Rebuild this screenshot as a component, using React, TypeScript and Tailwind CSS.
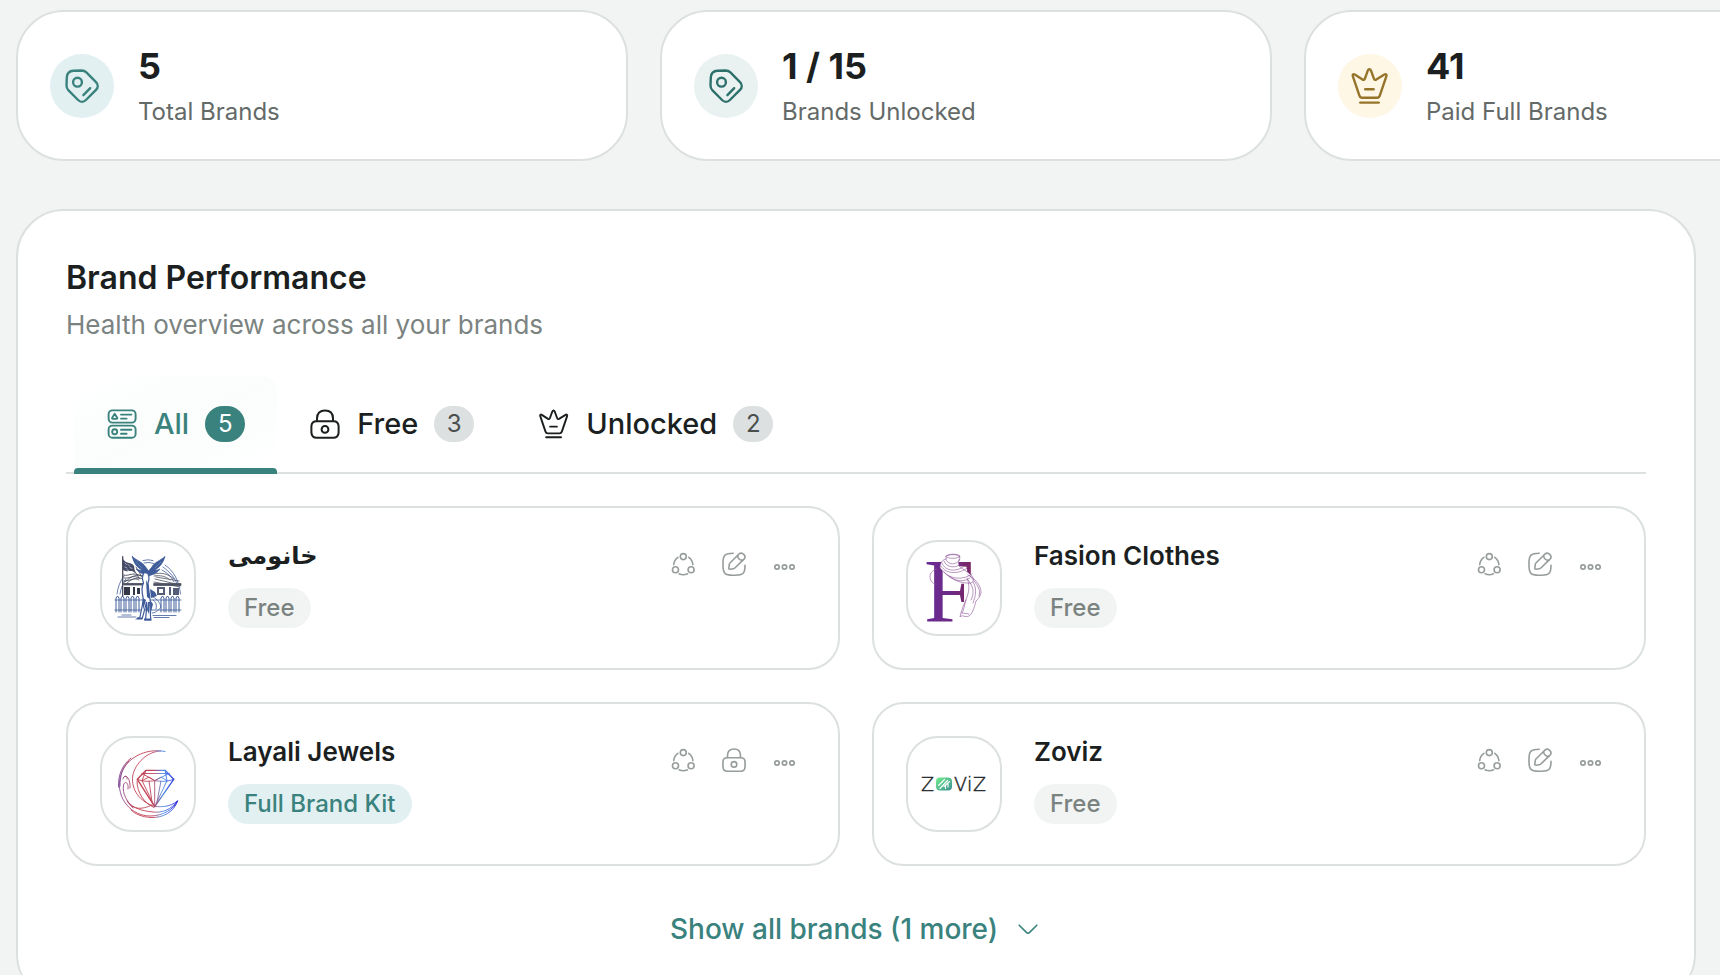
import React, { useState } from 'react';

type TabId = 'all' | 'free' | 'unlocked';

interface IconProps {
  className?: string;
}

interface Brand {
  id: number;
  name: string;
  plan: 'free' | 'full';
  logo: React.ReactNode;
  rtl?: boolean;
}

const TagIcon: React.FC<IconProps> = ({ className }) => (
  <svg viewBox="0 0 40 40" fill="none" stroke="currentColor" strokeWidth="2.4" strokeLinecap="round" strokeLinejoin="round" className={className} aria-hidden="true">
    <path d="M11.5 4.8L19.5 4.5C21.5 4.5 23 5 24.4 6.4L34 16.1C36.3 18.4 36.3 21.6 34 23.9L23.9 34C21.6 36.3 18.4 36.3 16.1 34L6.5 24.4C5 22.9 4.4 21.5 4.5 19.4L4.8 11.5C5 7 7 5 11.5 4.8Z" />
    <circle cx="15.5" cy="16.2" r="4.4" />
    <path d="M21.4 29.2L28.2 22.2" />
  </svg>
);

const CrownIcon: React.FC<IconProps> = ({ className }) => (
  <svg viewBox="0 0 40 40" fill="none" stroke="currentColor" strokeWidth="2.4" strokeLinecap="round" strokeLinejoin="round" className={className} aria-hidden="true">
    <path d="M2.8 10.2C2.3 8.6 3.3 7.7 4.8 8.6L12.5 13.6C13.6 14.2 14.4 13.8 14.8 12.8L17.9 4.4C18.6 2.7 20.2 2.7 20.9 4.4L24 12.8C24.4 13.8 25.2 14.2 26.3 13.6L34.4 8.6C35.9 7.7 36.9 8.6 36.4 10.2L29.8 29.6C29.3 31 28.6 31.7 27 31.7H12.2C10.6 31.7 9.9 31 9.4 29.6Z" />
    <path d="M15.2 23.3H23.6" />
    <path d="M10.2 36.6H28.8" />
  </svg>
);

const LockIcon: React.FC<IconProps> = ({ className }) => (
  <svg viewBox="0 0 32 32" fill="none" stroke="currentColor" strokeWidth="2" strokeLinecap="round" strokeLinejoin="round" className={className} aria-hidden="true">
    <path d="M8 13V10.4C8 5.4 11 2.4 16 2.4C21 2.4 24 5.4 24 10.4V13" />
    <path d="M7.5 13.2H24.5C27.6 13.2 29.4 15 29.6 18V24.6C29.4 28.2 27.6 29.8 24.2 29.8H7.8C4.4 29.8 2.6 28.2 2.4 24.6V18C2.6 15 4.4 13.2 7.5 13.2Z" />
    <circle cx="16" cy="21.4" r="3.4" />
  </svg>
);

const ListIcon: React.FC<IconProps> = ({ className }) => (
  <svg viewBox="0 0 32 32" fill="none" stroke="currentColor" strokeWidth="1.9" strokeLinecap="round" strokeLinejoin="round" className={className} aria-hidden="true">
    <rect x="2.6" y="2.4" width="27" height="12.2" rx="3.8" />
    <rect x="2.6" y="17.6" width="27" height="12.2" rx="3.8" />
    <path d="M8.7 5.8L11.2 9.7C11.5 10.4 11.2 10.9 10.5 10.9H6.9C6.2 10.9 5.9 10.4 6.2 9.7Z" />
    <circle cx="8.7" cy="23.7" r="2.5" />
    <path d="M15 6.6H25.4M15 10.6H20.6M15 21.8H25.4M15 25.8H20.6" />
  </svg>
);

const ShareIcon: React.FC<IconProps> = ({ className }) => (
  <svg viewBox="0 0 26 26" fill="none" stroke="currentColor" strokeWidth="1.6" strokeLinecap="round" className={className} aria-hidden="true">
    <circle cx="12.3" cy="5.6" r="3" />
    <circle cx="4.5" cy="18.7" r="3" />
    <circle cx="20.1" cy="18.7" r="3" />
    <path d="M2.7 13.6C2.9 10.6 4.5 8 6.9 6.3" />
    <path d="M21.9 13.6C21.7 10.6 20.1 8 17.7 6.3" />
    <path d="M8.1 22.8C10.7 24 13.9 24 16.5 22.8" />
  </svg>
);

const EditIcon: React.FC<IconProps> = ({ className }) => (
  <svg viewBox="0 0 26 26" fill="none" stroke="currentColor" strokeWidth="1.6" strokeLinecap="round" strokeLinejoin="round" className={className} aria-hidden="true">
    <path d="M12.2 2.2C4 2.2 2 4 2 12V14.6C2 22.4 4 24.2 11.8 24.2H14.2C22.2 24.2 24 22.4 24 14.2" />
    <path d="M17.8 3.2L9.2 11.8C8.7 12.3 8.4 12.8 8.3 13.5L7.8 17C7.7 17.9 8.1 18.3 9 18.2L12.4 17.7C13.1 17.6 13.6 17.3 14.1 16.8L23 8.2C25.8 5 21.3 0.2 17.8 3.2Z" />
    <path d="M16.6 4.6C16.8 7.2 18.8 9.5 21.8 9.4" />
  </svg>
);

const DotsIcon: React.FC<IconProps> = ({ className }) => (
  <svg viewBox="0 0 26 26" fill="none" stroke="currentColor" strokeWidth="1.7" className={className} aria-hidden="true">
    <circle cx="6" cy="16" r="2.2" />
    <circle cx="13.5" cy="16" r="2.2" />
    <circle cx="21" cy="16" r="2.2" />
  </svg>
);

const ChevronIcon: React.FC<IconProps> = ({ className }) => (
  <svg viewBox="0 0 28 28" fill="none" stroke="currentColor" strokeWidth="1.6" strokeLinecap="round" strokeLinejoin="round" className={className} aria-hidden="true">
    <path d="M5.2 10.2L12.4 17.4C13.5 18.5 14.5 18.5 15.6 17.4L22.8 10.2" />
  </svg>
);

const StatueLogo = () => (
  <svg viewBox="2 2 92 92" fill="none" stroke="#3f5c9a" strokeWidth="0.8" strokeLinecap="round" className="size-full" aria-hidden="true">
    <path d="M17 54C18 47 20 41 24 36M20 54C21 48 23 43 26 39M43 20.5Q48 19 53 20.5M44 23Q49 21.5 54 23.5M65 25C74 31 79 41 80.5 54M63 27C70 32 75 38 77 44M62 30C68 33 72 38 74 42" />
    {/* house */}
    <g stroke="#4d5262">
      <path d="M25 42C32 35 38 34 44 36M27 43C33 38 38 37 44 39M54 36C60 35 66 36 70 40M54 34C62 32 68 34 74 39M55 39L80 45M54 42L80 47M26 44H46M56 37L79 41" />
      <path d="M24 43.5H44V45H24ZM54 43.5H81V45.5H54Z" fill="#4d5262" />
    </g>
    <path d="M24 47H30V55H24ZM33 47H35V55H33ZM37 48H40V54H37Z" fill="#333847" stroke="none" />
    <path d="M57 47H65V55H57ZM69 47H71V55H69ZM73 48H79V55H73Z" fill="#545c78" stroke="none" />
    <path d="M59 49H63V53H59Z" fill="#fff" stroke="none" />
    {/* flag */}
    <path d="M22.7 16.5V56" stroke="#3a3f52" strokeWidth="1.2" />
    <path d="M23 19C27 25 31 21 34 26L35 33C31 29 28 33 23 30Z" fill="#454b66" stroke="none" />
    <path d="M23.5 35C29 37 32 31 41 36M24 38C30 39 33 34 40 38.5M24 41C30 41 34 37 39 40M36 27L42 37M34 30L39 38" stroke="#3a3f52" />
    <path d="M25 23L26.5 24.5M28 24.5L29.5 26M25 27L27 28M30 27.5L32 28.5M27 30L28.5 30.5" stroke="#d5d9e4" strokeWidth="0.7" />
    {/* wings */}
    <path d="M32.3 16.5C34 24 37 27 42 30C40 30.5 38 30 36 29C39 32 43 34.5 48 36C54 34.5 58 32 60 29C58 30 57 30.5 55 30C60 27 63 23 65 16.5C60 21 55 21.5 51.5 27.5L48.5 31L46 27.5C42 21.5 37 21 32.3 16.5Z" fill="#3f5c9a" stroke="#3f5c9a" />
    <path d="M36 22L42 28M61 22L55 28" stroke="#8fa1cb" strokeWidth="0.5" />
    {/* fence */}
    <path d="M15 60H81M15 70H81" />
    <path d="M16 72V58L17.5 56L19 58V72M21 72V58L22.5 56L24 58V72M26 72V58L27.5 56L29 58V72M31 72V58L32.5 56L34 58V72M36 72V58L37.5 56L39 58V72M61 72V58L62.5 56L64 58V72M66 72V58L67.5 56L69 58V72M71 72V58L72.5 56L74 58V72M76 72V58L77.5 56L79 58V72" strokeWidth="1" />
    {/* figure */}
    <path d="M44 33C42 36 42 39 43.5 43C41 48 42 53 43 57C43.5 64 41 70 40 77L37 79H42C44 73 45 68 46.5 62C47 69 46 74 45.5 80H51C49.5 73 51 66 50 59C49 53 48.5 48 48 43C49.5 39 49 36 48 34" fill="#fff" strokeWidth="1.2" />
    <path d="M46 40L48 44L50 59L47 57ZM43 58L46 60L43 70ZM48 62L50 62L49 74L47 70ZM50 49L55 52L57 56L51 58ZM50 60L53 64L51 72Z" fill="#3f5c9a" stroke="none" />
    <path d="M51 56C56 58 60 62 61 67C58 71 55 73 52 73M53 60C56 62 57 65 56 69" />
    <path d="M18 77H36M22 75H31M53 75.5H76M54 77.5H69" />
    <path d="M37 77.5H42V79H37ZM44 78.5H51V80.5H44Z" fill="#3f5c9a" stroke="none" />
  </svg>
);

const FashionLogo = () => (
  <svg viewBox="2 2 92 92" fill="none" strokeWidth="0.6" strokeLinecap="round" className="size-full overflow-visible" aria-hidden="true">
    <defs>
      <linearGradient id="fashion-ink" x1="0" x2="1" y1="0" y2="0">
        <stop offset="0" stopColor="#6b2c96" />
        <stop offset="0.5" stopColor="#6b2a86" />
        <stop offset="1" stopColor="#7c2560" />
      </linearGradient>
    </defs>
    <text x="18" y="82" fontSize="90" fill="url(#fashion-ink)" className="font-['Liberation_Serif',serif]">F</text>
    <g stroke="#8a4f96">
      <path d="M40 16C43 13.5 51 13.5 54 16C53 20 52 23 53 26C56 29 61 31 66 36C69 41 67 44 61 43C53 43 42 38 34 28C34 23 36 20 40 19C41 18 39 17 40 16Z" fill="#fff" />
      <ellipse cx="47" cy="16.5" rx="6.5" ry="1.8" />
      <path d="M40 19C41 25 51 26 54 19M38 21C40 28 51 29 56 23M36 23C39 32 52 32 58 26M35 26C40 35 54 34 61 28M38 32C45 40 58 40 66 34M43 36C50 42 58 42 64 38" />
      <path d="M31 29C24 30 22 38 26 42C28 44 30 45 31 44" />
      <path d="M62 35C69 38 75 46 75 52C75 56 72 59 70 61C68 69 66 74 63 76C59 78 56 74 54 77C55 70 59 63 61 57C64 49 63 43 61 38" />
      <path d="M64 36C72 45 75 50 73 56M62 40C67 46 69 52 65 60M67 42C71 48 70 55 67 63M60 60C58 66 58 70 56 73M56 73L63 74" />
    </g>
  </svg>
);

const JewelsLogo = () => (
  <svg viewBox="2 2 92 92" fill="none" stroke="url(#jewels-line)" strokeWidth="0.9" strokeLinecap="round" strokeLinejoin="round" className="size-full" aria-hidden="true">
    <defs>
      <linearGradient id="jewels-line" gradientUnits="userSpaceOnUse" x1="18" y1="0" x2="78" y2="0">
        <stop offset="0" stopColor="#7d4a9c" />
        <stop offset="0.3" stopColor="#c43f50" />
        <stop offset="0.58" stopColor="#c0445a" />
        <stop offset="0.75" stopColor="#4d8fe8" />
        <stop offset="1" stopColor="#2c1fd6" />
      </linearGradient>
    </defs>
    <path d="M65 15.5C46 11.5 24 22 20 42C16 63 32 80 50 80C63 80 74 73 77.5 65C70 71 62 71 55 70.5C40 66 31 54 32.7 40C35 27 48 15 61 15" />
    <path d="M77.5 65C74 76 63 82 51 81.5C42 81 35 78 31 74M77.5 65C71 74 62 77 53 76C42 75 33 72 28 66" />
    <path d="M31 22C22 29 18 39 18.5 51M29 25C22 32 20 40 20 50M37 45C37 57 44 67 54 71.5M27 65C32 74 42 74 52 69" />
    <path d="M28 53C29 47 25 44 23.5 49C22 58 27 65 33 72M24 41C26 39 28 41 27 43M30 52C31 41 24 37 23 43" />
    <path d="M46 34.3H65L73.7 43.3L54.7 70.7L37.3 43.3Z" strokeWidth="1.3" />
    <path d="M37.3 43.3C44 46 49 45.5 54.7 44.7C61 45.5 67 46 73.7 43.3M46 34.3L42 44.7L54.7 70.7L67 44.7L65 34.3M42 37.5L54.7 44.7L69 37.5M42 44.7L49 41L54.7 44.7L61 41L67 44.7M54.7 44.7V70.7M49 45L52 66M61 45L57 66M42 37.5H69" />
  </svg>
);

const ZovizLogo = () => (
  <svg viewBox="0 0 68 14" className="w-[68px] overflow-visible" aria-hidden="true">
    <defs>
      <linearGradient id="zoviz-mark" x1="0" y1="0" x2="1" y2="1">
        <stop offset="0" stopColor="#6fef8d" />
        <stop offset="1" stopColor="#3d8f92" />
      </linearGradient>
    </defs>
    <g fill="#26292b" stroke="#26292b" strokeWidth="0.5" fontSize="19" className="font-['DejaVu_Sans',sans-serif] font-extralight">
      <text x="1" y="14">Z</text>
      <text x="34" y="14">V</text>
      <text x="47" y="14">i</text>
      <text x="53" y="14">Z</text>
    </g>
    <rect x="16" y="0.5" width="16" height="13" rx="4" fill="url(#zoviz-mark)" />
    <path d="M18.5 8.5L24.5 2.5M20 11.5L27.5 3.5M24 9.5L29.5 4.5M25.5 11.5V8M28 10V6.5" stroke="#fff" strokeWidth="1.1" strokeLinecap="round" />
  </svg>
);

const stats = [
  { value: '5', label: 'Total Brands', Icon: TagIcon, tone: 'bg-[#e2f0f2] text-[#3a827d]' },
  { value: '1 / 15', label: 'Brands Unlocked', Icon: TagIcon, tone: 'bg-[#e9f2f1] text-[#2e716c]' },
  { value: '41', label: 'Paid Full Brands', Icon: CrownIcon, tone: 'bg-[#fff7e5] text-[#96742a]' },
];

const tabs: { id: TabId; label: string; count: number; Icon: React.FC<IconProps> }[] = [
  { id: 'all', label: 'All', count: 5, Icon: ListIcon },
  { id: 'free', label: 'Free', count: 3, Icon: LockIcon },
  { id: 'unlocked', label: 'Unlocked', count: 2, Icon: CrownIcon },
];

const brands: Brand[] = [
  { id: 1, name: 'خانومی', plan: 'free', logo: <StatueLogo />, rtl: true },
  { id: 2, name: 'Fasion Clothes', plan: 'free', logo: <FashionLogo /> },
  { id: 3, name: 'Layali Jewels', plan: 'full', logo: <JewelsLogo /> },
  { id: 4, name: 'Zoviz', plan: 'free', logo: <ZovizLogo /> },
];

const ActionButton: React.FC<{ label: string; children: React.ReactNode }> = ({ label, children }) => (
  <button type="button" aria-label={label} className="flex h-12 w-11 items-center justify-center text-[#969d9b] hover:text-[#3a827d]">
    {children}
  </button>
);

const BrandCard: React.FC<{ brand: Brand }> = ({ brand }) => (
  <article className="flex items-start gap-8 rounded-[32px] border-2 border-[#dce0df] bg-white p-8">
    <div className="flex size-24 shrink-0 items-center justify-center rounded-[32px] border-2 border-[#dce0df]">
      {brand.logo}
    </div>
    <div className="flex min-w-0 flex-1 flex-col items-start gap-4">
      <h3
        dir={brand.rtl ? 'rtl' : 'ltr'}
        className={`leading-8 font-semibold text-[#1c1f1f] ${brand.rtl ? "font-['DejaVu_Sans',sans-serif] text-2xl" : 'text-[26px]'}`}
      >
        {brand.name}
      </h3>
      <span
        className={`rounded-full px-4 text-2xl leading-10 font-medium ${
          brand.plan === 'full' ? 'bg-[#e2f0f2] text-[#3a827d]' : 'bg-[#f2f4f4] text-[#7b8381]'
        }`}
      >
        {brand.plan === 'full' ? 'Full Brand Kit' : 'Free'}
      </span>
    </div>
    <div className="flex gap-1.5">
      <ActionButton label="Share">
        <ShareIcon className="size-[26px]" />
      </ActionButton>
      {brand.plan === 'full' ? (
        <ActionButton label="Lock">
          <LockIcon className="size-[26px]" />
        </ActionButton>
      ) : (
        <ActionButton label="Edit">
          <EditIcon className="size-[26px]" />
        </ActionButton>
      )}
      <ActionButton label="More">
        <DotsIcon className="size-[26px]" />
      </ActionButton>
    </div>
  </article>
);

export default function App() {
  const [activeTab, setActiveTab] = useState<TabId>('all');

  return (
    <div className="min-h-screen overflow-x-hidden bg-[#f2f4f3] pt-2.5 pr-6 pb-12 pl-4 font-['Inter',sans-serif] text-[#1c1f1f]">
      <div className="flex gap-8">
        {stats.map(({ value, label, Icon, tone }) => (
          <div key={label} className="flex w-[612px] shrink-0 items-center gap-6 rounded-[48px] border-2 border-[#dce0df] bg-white px-8 py-[31px]">
            <div className={`flex size-16 items-center justify-center rounded-full ${tone}`}>
              <Icon className="size-10" />
            </div>
            <div className="flex flex-col gap-1.5">
              <p className="text-4xl leading-[47px] font-bold">{value}</p>
              <p className="text-2xl leading-8 text-[#646a68]">{label}</p>
            </div>
          </div>
        ))}
      </div>

      <section className="mt-12 rounded-[48px] border-2 border-[#dce0df] bg-white px-12 pt-12 pb-10">
        <h2 className="text-[32px] leading-[38px] font-semibold">Brand Performance</h2>
        <p className="mt-2 text-[26px] leading-[39px] text-[#7b8381]">Health overview across all your brands</p>

        <div role="tablist" className="mt-8 flex border-b-2 border-[#dce0df] px-2">
          {tabs.map(({ id, label, count, Icon }) => {
            const isActive = activeTab === id;
            return (
              <button
                key={id}
                type="button"
                role="tab"
                aria-selected={isActive}
                onClick={() => setActiveTab(id)}
                className={`relative -mb-0.5 flex items-center gap-4 px-8 pt-[30px] pb-8 text-[29px] leading-9 font-medium ${
                  isActive ? 'rounded-t-2xl bg-linear-to-br from-white via-[#fafdfc] to-white text-[#3a827d]' : 'text-[#1c1f1f]'
                }`}
              >
                <Icon className="size-8" />
                {label}
                <span
                  className={`w-10 rounded-full text-center text-2xl leading-9 font-normal ${
                    isActive ? 'bg-[#3a827d] text-white' : 'bg-[#dce0e0] text-[#4a4f4e]'
                  }`}
                >
                  {count}
                </span>
                {isActive && <span className="absolute inset-x-0 bottom-0 h-1.5 rounded-t bg-[#3a827d]" />}
              </button>
            );
          })}
        </div>

        <div className="mt-8 grid grid-cols-2 gap-8">
          {brands.map((brand) => (
            <BrandCard key={brand.id} brand={brand} />
          ))}
        </div>

        <button type="button" className="mx-auto mt-8 flex h-[62px] items-center gap-4 text-[28px] font-medium text-[#3a827d]">
          Show all brands (1 more)
          <ChevronIcon className="size-7" />
        </button>
      </section>
    </div>
  );
}
